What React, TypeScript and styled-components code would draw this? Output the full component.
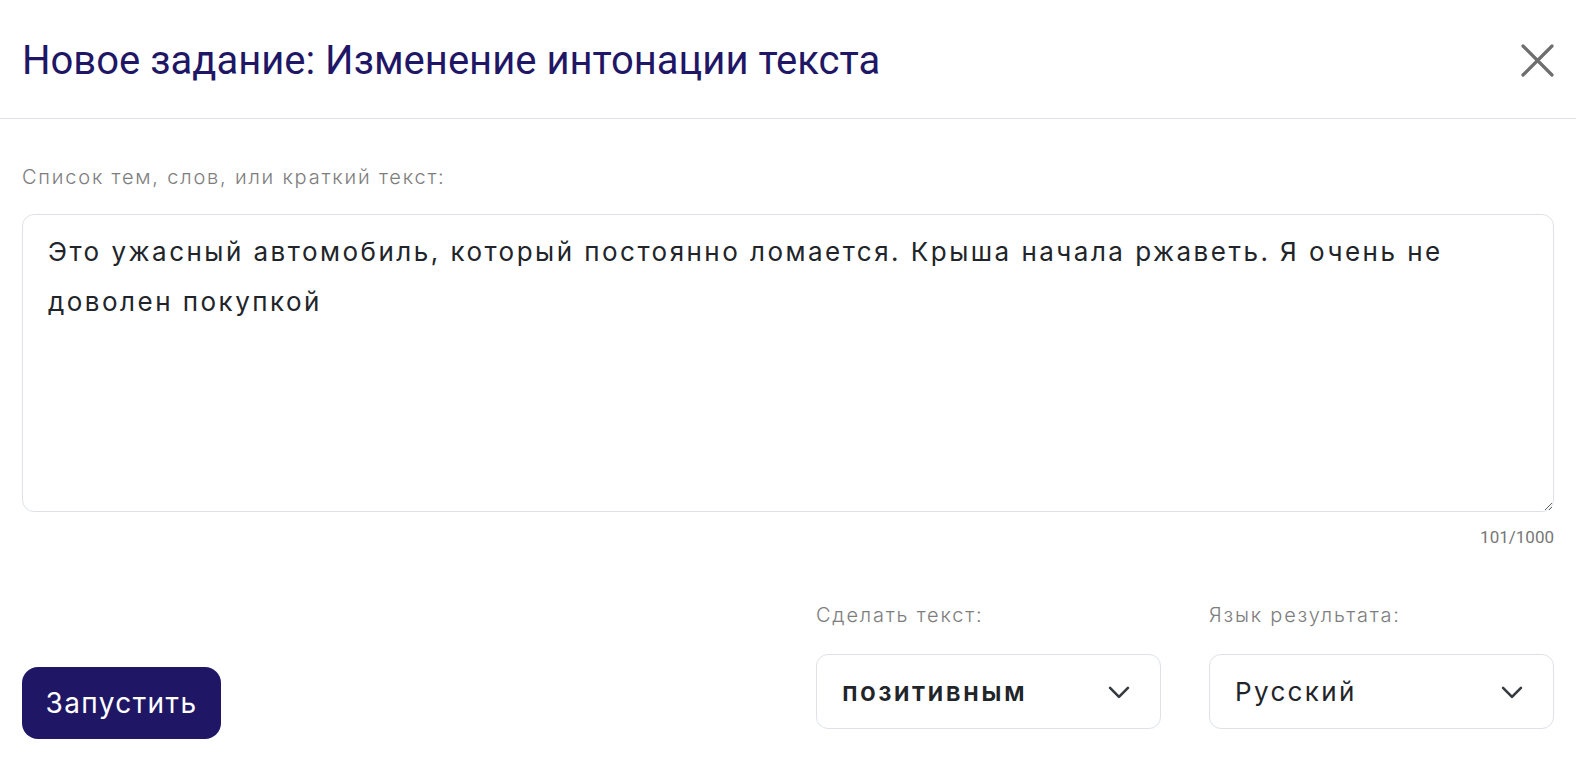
import React from "react";
import styled, { createGlobalStyle } from "styled-components";

const Global = createGlobalStyle`
  html, body { margin: 0; padding: 0; background: #ffffff; overflow: hidden; }
  * { box-sizing: border-box; }
`;

const Modal = styled.div`
  width: 100%;
  height: 100vh;
  background: #fff;
  display: flex;
  flex-direction: column;
  font-family: Inter, "Noto Sans", sans-serif;
`;

const Header = styled.header`
  height: 119px;
  flex-shrink: 0;
  border-bottom: 1px solid #dee2e6;
  display: flex;
  align-items: center;
  justify-content: space-between;
  padding: 0 22px 0 22px;
`;

const Title = styled.h1`
  margin: 0;
  padding-top: 2px;
  font-family: Roboto, "Liberation Sans", sans-serif;
  font-weight: 400;
  font-size: 40px;
  color: #1f1766;
`;

const CloseButton = styled.button`
  border: none;
  background: none;
  padding: 0;
  width: 33px;
  height: 33px;
  display: flex;
  align-items: center;
  justify-content: center;
  margin-top: 2px;
  cursor: pointer;
`;

const Body = styled.main`
  padding: 44px 22px 0 22px;
  display: flex;
  flex-direction: column;
`;

const Label = styled.label`
  display: block;
  font-family: Inter, "Noto Sans", sans-serif;
  font-weight: 300;
  font-size: 20px;
  letter-spacing: 0.09em;
  color: #7d7d7d;
  line-height: 28px;
`;

const TextArea = styled.textarea`
  display: block;
  margin-top: 23px;
  width: 100%;
  height: 298px;
  border: 1.5px solid #dee2e6;
  border-radius: 12px;
  padding: 12px 25px;
  font-family: Inter, "Noto Sans", sans-serif;
  font-size: 26px;
  letter-spacing: 0.095em;
  line-height: 50px;
  color: #212529;
  resize: vertical;
  outline: none;
`;

const Counter = styled.div`
  text-align: right;
  font-family: Roboto, "Liberation Sans", sans-serif;
  font-size: 17px;
  color: #777;
  margin-top: 13px;
  line-height: 24px;
`;

const Footer = styled.div`
  margin-top: 52px;
  display: flex;
  justify-content: space-between;
  align-items: flex-end;
`;

const RunButton = styled.button`
  width: 199px;
  height: 72px;
  border: none;
  border-radius: 16px;
  background: #1f1766;
  color: #fff;
  font-family: Inter, "Noto Sans", sans-serif;
  font-size: 28px;
  letter-spacing: 0.05em;
  margin-bottom: -10px;
  padding: 0;
  cursor: pointer;
`;

const Selects = styled.div`
  display: flex;
  gap: 48px;
`;

const Field = styled.div`
  display: flex;
  flex-direction: column;
  width: 345px;
  flex-shrink: 0;
`;

const SelectBox = styled.div<{ $bold?: boolean }>`
  margin-top: 25px;
  height: 75px;
  border: 1.5px solid #dee2e6;
  border-radius: 12px;
  display: flex;
  align-items: center;
  justify-content: space-between;
  padding: 0 30px 0 25px;
  font-family: Inter, "Noto Sans", sans-serif;
  font-size: 26px;
  letter-spacing: 0.09em;
  color: #212529;
  font-weight: ${(p) => (p.$bold ? 600 : 400)};
`;

const Chevron = () => (
  <svg width="22" height="22" viewBox="0 0 16 16" fill="none">
    <path d="M1.5 5l6.5 6.5 6.5-6.5" stroke="#343a40" strokeWidth="1.9" strokeLinecap="round" strokeLinejoin="round" />
  </svg>
);

export default function App() {
  return (
    <>
      <Global />
      <Modal>
        <Header>
          <Title>Новое задание: Изменение интонации текста</Title>
          <CloseButton aria-label="Закрыть">
            <svg width="33" height="33" viewBox="0 0 33 33">
              <path d="M2 2L31 31M31 2L2 31" stroke="#6e6e6e" strokeWidth="3.2" strokeLinecap="round" />
            </svg>
          </CloseButton>
        </Header>
        <Body>
          <Label>Список тем, слов, или краткий текст:</Label>
          <TextArea
            defaultValue="Это ужасный автомобиль, который постоянно ломается. Крыша начала ржаветь. Я очень не доволен покупкой"
          />
          <Counter>101/1000</Counter>
          <Footer>
            <RunButton>Запустить</RunButton>
            <Selects>
              <Field>
                <Label>Сделать текст:</Label>
                <SelectBox $bold>
                  <span>позитивным</span>
                  <Chevron />
                </SelectBox>
              </Field>
              <Field>
                <Label>Язык результата:</Label>
                <SelectBox>
                  <span>Русский</span>
                  <Chevron />
                </SelectBox>
              </Field>
            </Selects>
          </Footer>
        </Body>
      </Modal>
    </>
  );
}
